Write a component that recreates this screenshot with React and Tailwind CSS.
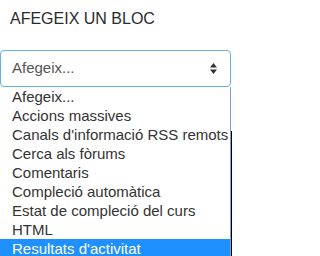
import React from 'react';

const options = [
  'Afegeix...',
  'Accions massives',
  "Canals d'informació RSS remots",
  'Cerca als fòrums',
  'Comentaris',
  'Compleció automàtica',
  'Estat de compleció del curs',
  'HTML',
  "Resultats d'activitat",
];

const SortArrows = () => (
  <svg width="7" height="11" viewBox="0 0 7 11" className="shrink-0">
    <path d="M3.5 0 L7 4.5 H0 Z" fill="#333" />
    <path d="M0 6.5 H7 L3.5 11 Z" fill="#333" />
  </svg>
);

const App = () => {
  const selected = options.length - 1;

  return (
    <div className="w-[232px] h-[256px] bg-white overflow-hidden font-['Liberation_Sans',Arial,sans-serif]">
      {/* Block title */}
      <h2 className="pl-[10px] pt-[9px] text-[16px] leading-[19px] text-[#2b2b2b]">AFEGEIX UN BLOC</h2>

      {/* Select box */}
      <div className="mt-[22px] w-[231px] h-[37px] border border-[#66afe9] rounded-[4px] flex items-center justify-between pl-[11px] pr-[13px] text-[15px] text-[#555]">
        <span>Afegeix...</span>
        <SortArrows />
      </div>

      {/* Open dropdown list */}
      <div className="relative w-[231px] border-r border-[#7fa0d8]">
        {options.map((opt, i) => (
          <div
            key={opt}
            className={`h-[19px] leading-[19px] pl-[12px] text-[15px] whitespace-nowrap ${
              i === selected ? 'bg-[#1e90ff] text-white' : 'text-[#333]'
            }`}
          >
            {opt}
          </div>
        ))}
        <div className="absolute right-[-2px] top-[44px] bottom-0 w-px bg-black"></div>
      </div>
    </div>
  );
};

export default App;
